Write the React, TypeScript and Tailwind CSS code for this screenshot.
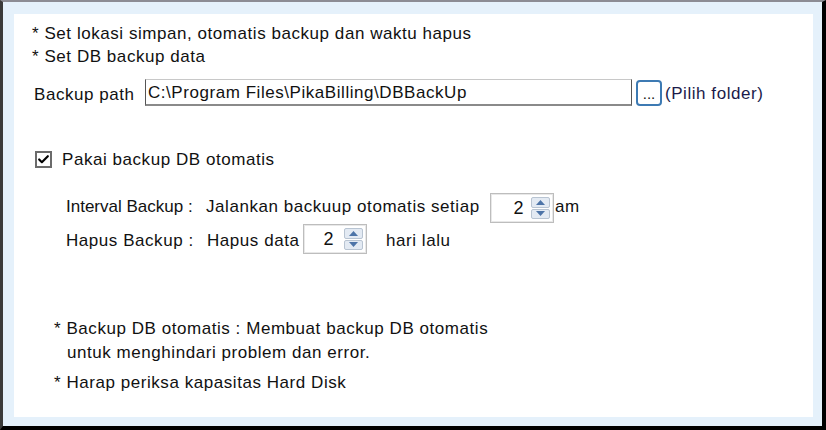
import { Check } from 'lucide-react';

const font = { fontFamily: '"Liberation Sans", Arial, sans-serif' };

function Spinner({ value, numPad }: { value: number; numPad: string }) {
  return (
    <div className="flex h-[30px] w-[64px] items-center border border-[#bdbdbd] bg-white p-[3px] shadow-[inset_0_0_0_1px_#e8e8e8]">
      <span className={`flex-1 text-right text-[18px] leading-none ${numPad}`}>{value}</span>
      <div className="flex h-full w-[19px] flex-col gap-[1px]">
        <div className="flex flex-1 items-center justify-center rounded-[2px] border border-[#b8c4d2] bg-[#e3eaf3]">
          <svg width="9" height="5" viewBox="0 0 9 5"><path d="M0 5 L4.5 0 L9 5 Z" fill="#4d74a8" /></svg>
        </div>
        <div className="flex flex-1 items-center justify-center rounded-[2px] border border-[#b8c4d2] bg-[#e3eaf3]">
          <svg width="9" height="5" viewBox="0 0 9 5"><path d="M0 0 L4.5 5 L9 0 Z" fill="#4d74a8" /></svg>
        </div>
      </div>
    </div>
  );
}

export default function App() {
  return (
    <div
      className="flex h-[430px] w-[826px] border-t-2 border-l-[3px] border-r-4 border-b-4 border-t-[#8c8c94] border-l-[#3a3a3a] border-r-black border-b-black bg-[#e5f1fb] pt-[12px] pl-[11px] pr-[9px] pb-[9px] text-[17px] leading-[23px] tracking-[0.55px] text-[#111]"
      style={font}
    >
      <div className="flex-1 bg-white pt-[8px] pl-[18px]">
        {/* Header notes */}
        <p>* Set lokasi simpan, otomatis backup dan waktu hapus</p>
        <p>* Set DB backup data</p>

        {/* Backup path */}
        <div className="mt-[11px] flex h-[27px] items-center">
          <span className="ml-[2px] w-[111px] pt-[4px]">Backup path</span>
          <div className="flex h-[27px] w-[487px] items-center border-x border-t border-b-2 border-x-[#555] border-t-[#c8c8c8] border-b-[#8a8a8a] px-[2px]">
            C:\Program Files\PikaBilling\DBBackUp
          </div>
          <button className="ml-[4px] flex h-[26px] w-[26px] items-end justify-center rounded-[4px] border-2 border-[#3d7ab3] bg-white pb-[3px] text-[15px] leading-none tracking-normal">
            ...
          </button>
          <span className="ml-[3px] pt-[2px] text-[#1b1b4a]">(Pilih folder)</span>
        </div>

        {/* Checkbox */}
        <div className="mt-[44px] flex items-center">
          <div className="ml-[3px] -mt-[2px] flex h-[17px] w-[17px] items-center justify-center border-2 border-[#6b6b6b] bg-white">
            <Check className="h-[13px] w-[13px] text-black" strokeWidth={4} />
          </div>
          <span className="ml-[10px] -mt-[2px]">Pakai backup DB otomatis</span>
        </div>

        {/* Interval / Hapus */}
        <div className="mt-[22px] ml-[34px] flex flex-col gap-[1px]">
          <div className="flex h-[30px] items-center">
            <span className="w-[140px] -mt-[4px] tracking-normal">Interval Backup :</span>
            <span className="w-[284px] -mt-[4px]">Jalankan backuup otomatis setiap</span>
            <Spinner value={2} numPad="pr-[7px]" />
            <span className="ml-[1px] -mt-[4px]">am</span>
          </div>
          <div className="flex h-[30px] items-center">
            <span className="w-[141px] pt-[3px]">Hapus Backup :</span>
            <span className="w-[96px] pt-[3px]">Hapus data</span>
            <Spinner value={2} numPad="pr-[10px]" />
            <span className="ml-[19px] pt-[3px]">hari lalu</span>
          </div>
        </div>

        {/* Footer notes */}
        <div className="mt-[63px] ml-[22px]">
          <p>* Backup DB otomatis : Membuat backup DB otomatis</p>
          <p className="mt-[1px] ml-[13px]">untuk menghindari problem dan error.</p>
          <p className="mt-[7px]">* Harap periksa kapasitas Hard Disk</p>
        </div>
      </div>
    </div>
  );
}
